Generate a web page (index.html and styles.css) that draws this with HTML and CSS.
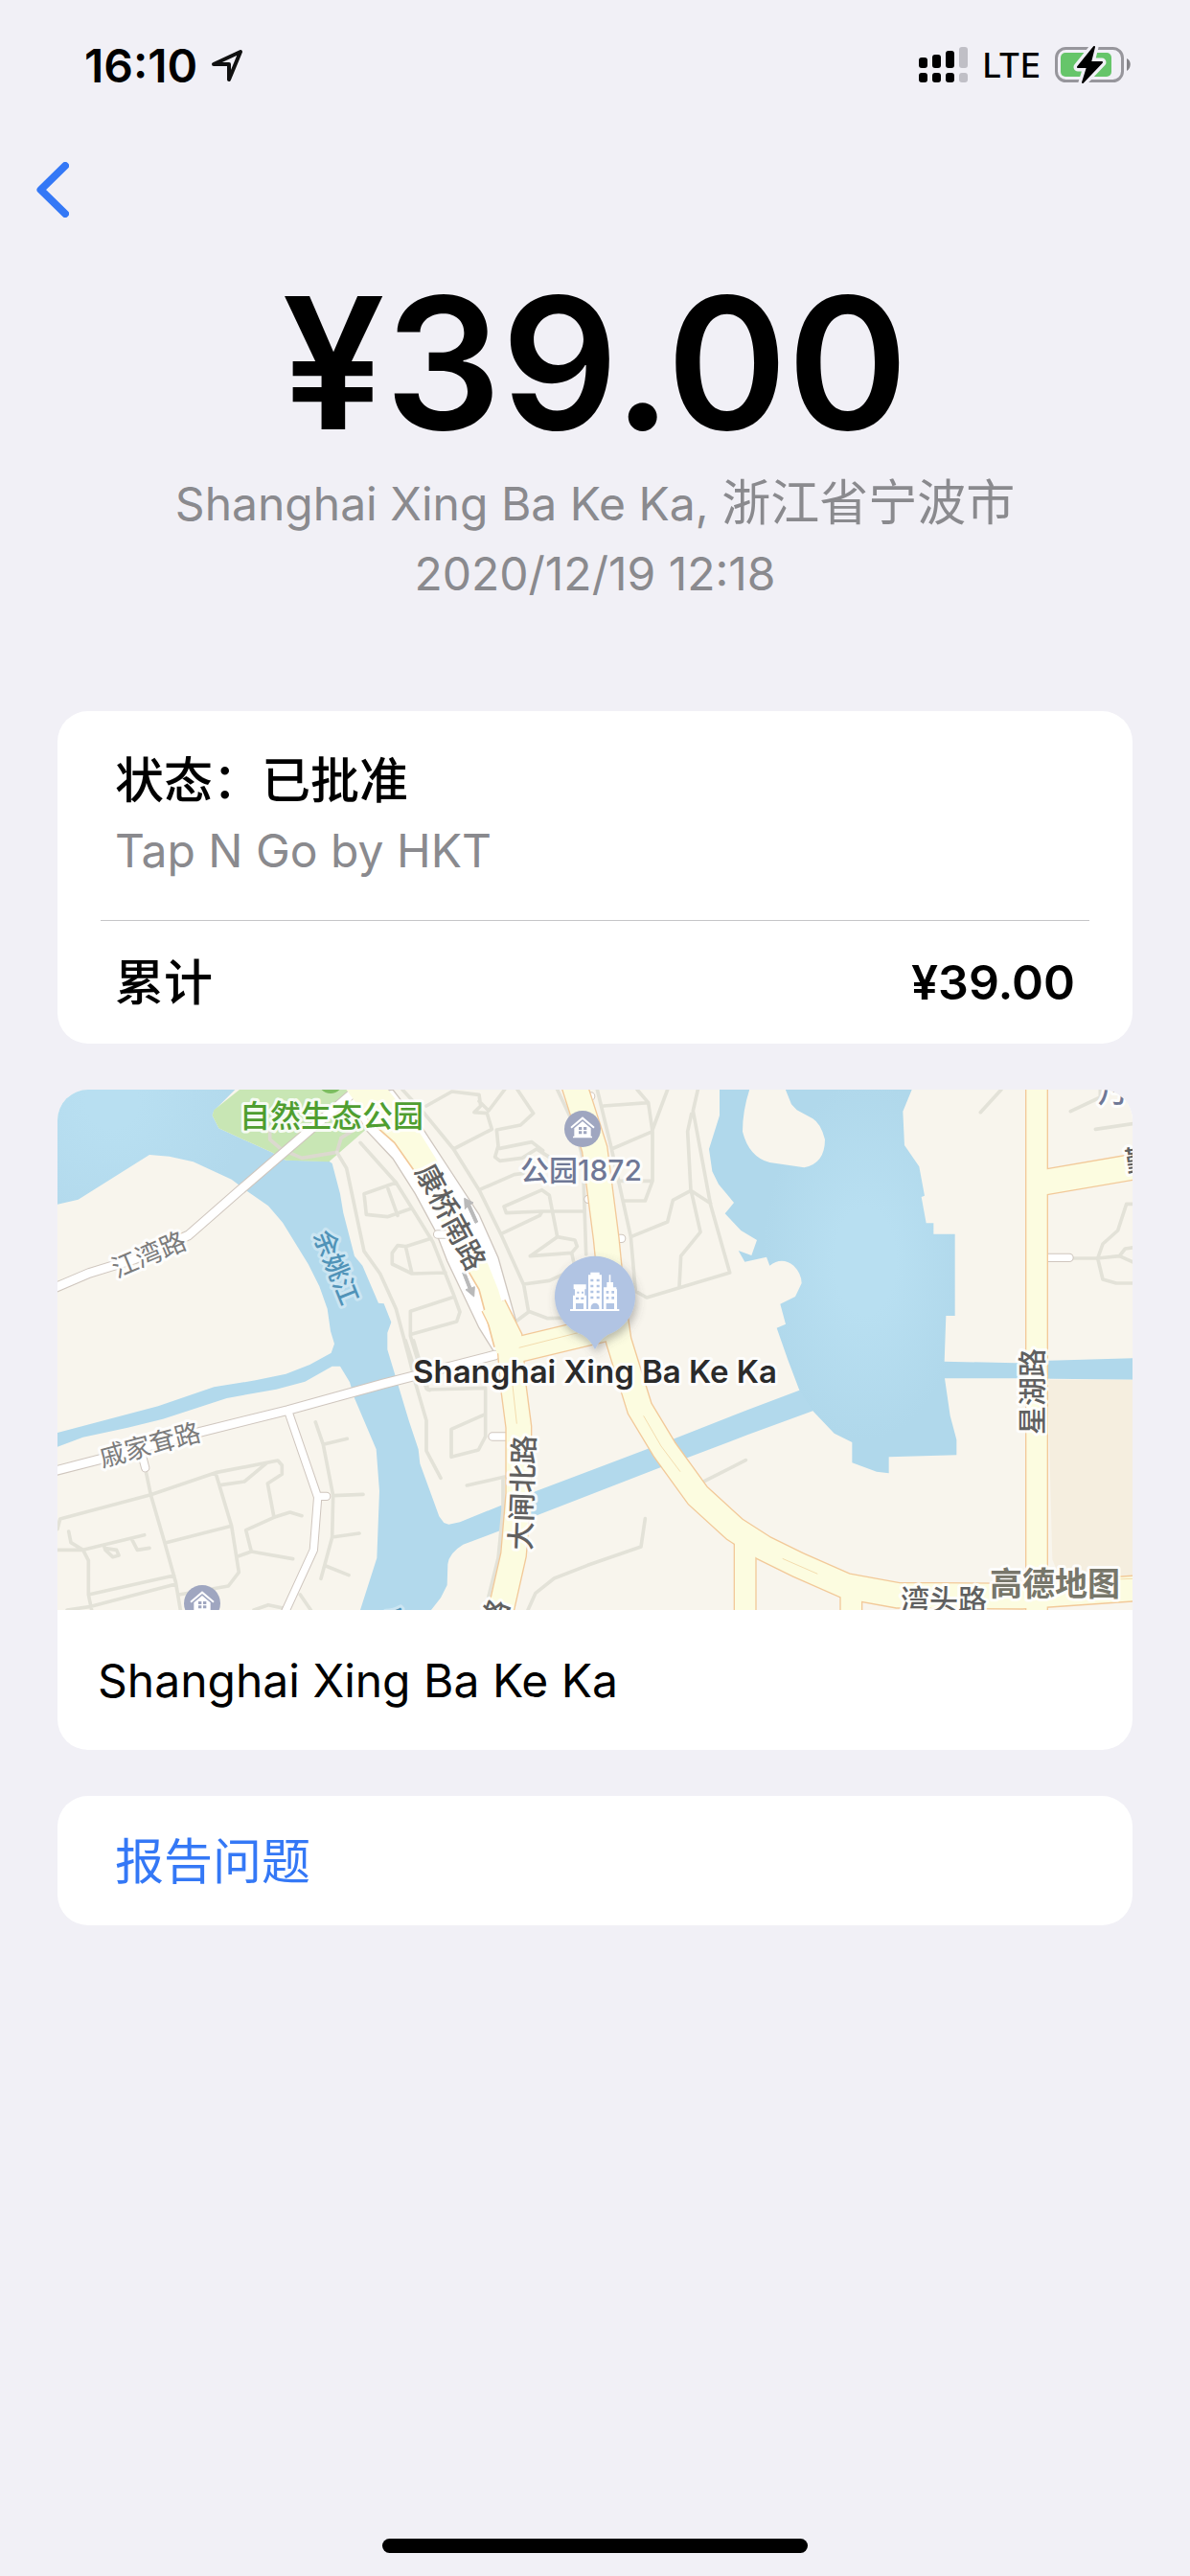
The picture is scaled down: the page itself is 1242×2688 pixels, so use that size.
FILE: index.html
```html
<!DOCTYPE html>
<html lang="zh-CN">
<head>
<meta charset="utf-8">
<meta name="viewport" content="width=device-width">
<title>¥39.00</title>
<link rel="stylesheet" href="styles.css">
</head>
<body>
<header class="status-bar">
  <div class="status-left">
    <span class="clock">16:10</span>
    <svg class="locate" viewBox="0 0 34 34" aria-hidden="true"><path d="M3 16 31 3 19 32V16Z" /></svg>
  </div>
  <div class="status-right">
    <svg class="signal" viewBox="0 0 52 38" aria-hidden="true">
      <g class="signal-on"><rect x="0" y="11" width="9" height="11" rx="3"/><rect x="14" y="8" width="9" height="14" rx="3"/><rect x="28" y="4" width="9" height="18" rx="3"/><rect x="0" y="27" width="9" height="10" rx="3"/><rect x="14" y="27" width="9" height="10" rx="3"/><rect x="28" y="27" width="9" height="10" rx="3"/></g>
      <g class="signal-off"><rect x="42" y="0" width="9" height="22" rx="3"/><rect x="42" y="27" width="9" height="10" rx="3"/></g>
    </svg>
    <span class="network">LTE</span>
    <svg class="battery" viewBox="0 0 80 40" aria-hidden="true">
      <rect class="battery-shell" x="1.500" y="2.500" width="69" height="34" rx="10"/>
      <path class="battery-nub" d="M75 13c5 2 5 10 0 13Z"/>
      <rect class="battery-level" x="6" y="7" width="53" height="25" rx="5"/>
      <path class="bolt-gap" d="M41 1 24 22h10l-5 16L49 17H37Z"/>
      <path class="bolt" d="M41 1 24 22h10l-5 16L49 17H37Z"/>
    </svg>
  </div>
</header>
<nav class="nav">
  <button class="back" type="button" aria-label="返回"><svg viewBox="0 0 34 58"><path d="M30 4 4.500 29 30 54"/></svg></button>
</nav>
<main class="content">
  <section class="summary">
    <h1 class="amount">¥39.00</h1>
    <p class="meta">Shanghai Xing Ba Ke Ka, <span class="han">浙江省宁波市</span><br>2020/12/19 12:18</p>
  </section>

  <section class="card details">
    <div class="status">
      <h2 class="row-title han">状态：已批准</h2>
      <p class="row-note">Tap N Go by HKT</p>
    </div>
    <div class="total">
      <span class="han">累计</span><span class="total-value">¥39.00</span>
    </div>
  </section>

  <section class="card place">
    <svg class="map" viewBox="0 0 1122 543" preserveAspectRatio="xMidYMid slice" role="img" aria-label="地图">
      <defs>
        <filter id="pin-shadow" x="-30%" y="-30%" width="160%" height="160%"><feDropShadow dx="6" dy="14" stdDeviation="14" flood-color="#555" flood-opacity=".4"/></filter>
        <radialGradient id="lake-light" gradientUnits="userSpaceOnUse" cx="2560" cy="560" r="560" gradientTransform="translate(1100 0) scale(.57 1)"><stop offset=".3" stop-color="#b8dff1"/><stop offset="1" stop-color="#b0d8eb"/></radialGradient>
        <radialGradient id="bay-light" gradientUnits="userSpaceOnUse" cx="200" cy="60" r="420"><stop offset=".2" stop-color="#b8dff1"/><stop offset="1" stop-color="#b2d9ec"/></radialGradient>
        <g id="house"><circle class="badge" r="57"/><path class="roof" d="M-36-4 0-34 36-4"/><path class="glyph" d="M-26-2 0-24 26-2V23H30V28H-30V23H-26Z"/><path class="badge" d="M-12-6h10v9h-10zM3-6h10v9H3zM-12 7h10v9h-10zM3 7h10v9H3z"/></g>
        <g id="roads-white">
          <path class="w32" d="M20 645 130 598 270 555 440 480 600 340 960 30"/>
          <path class="w32" d="M20 1218 160 1182 480 1095 750 1028 1050 945 1400 855"/>
          <path class="w30" d="M752 1030 845 1300 832 1465 740 1665M845 1297H872M290 1150 305 1208"/>
          <path class="w30" d="M1392 1110H1450M1220 477H1250M1760 490H1796M1690 45H1700M1692 367H1700M3110 550H3198"/>
        </g>
        <g id="roads-yellow">
          <path class="w80" d="M1395 700 1445 800 1457 950 1474 1080V1290L1458 1480 1415 1670"/>
          <path class="w80" d="M1420 850 1770 766"/>
          <path class="w80" d="M1648 10 1712 210 1748 490 1765 660 1787 810 1853 1022 1930 1150 2035 1295 2150 1400 2240 1458 2350 1512 2500 1578 2660 1607 3050 1610 3410 1585"/>
          <path class="w70" d="M2183 1440V1670M2515 1590V1670M3096 10V1670"/>
          <path class="w80" d="M3096 318 3410 264"/>
        </g>
      </defs>
      <rect class="land" width="1122" height="543"/>
      <g transform="translate(-10 -8) scale(.333333)">
        <path class="water" d="M0 0H610L520 90 515 105 535 145 700 220 745 245 880 248 890 255 915 350 925 410 960 545 985 575 1035 692 1052 694 1075 752 1063 785V838L1100 960 1130 1060 1160 1150 1165 1195 1225 1360 1240 1380 1255 1385 1290 1378 1420 1325 1530 1280 1875 1150 1965 1115 2190 1027 2353 965 2400 1000 2395 1030 2190 1105 2005 1175 1910 1210 1535 1355 1415 1405 1300 1448Q1255 1475 1252 1510L1250 1575 1230 1615 1200 1653H978L1030 1490 1038 1280 1028 1150 960 990 945 940 915 890H890L805 938 715 962 560 990 360 1055 250 1082 110 1112 30 1142V1098L345 1015 520 955 650 934 745 914 820 885 887 848 897 820 885 780 875 710 850 640 815 570 735 440 690 388 625 343 575 305 455 250 380 233 318 228 95 368 0 390Z"/>
        <path class="lake" d="M2103 0V105L2070 210 2080 280 2100 320 2148 378 2120 412 2170 465 2220 495 2203 543 2162 528 2182 563 2250 548 2260 575Q2298 545 2335 575 2360 600 2360 630L2340 672 2293 695 2310 758 2282 770 2317 870 2353 965 2395 1030 2462 1100 2518 1128V1192L2595 1220 2633 1225V1174L2845 1168V1120L2825 1045 2808 928H3030L3400 932V865L3135 872 3030 880 2807 875 2812 732H2840V476H2773V442H2750L2735 360 2745 356 2728 265 2682 198 2677 92 2715 0Z"/>
        <path class="land" d="M2205 0Q2175 80 2175 155 2195 235 2260 252L2368 268Q2433 255 2433 180 2420 130 2395 115L2345 88 2328 70 2300 0Z"/>
        <path class="park" d="M600 24 520 88 515 105 535 145 700 220 745 245 880 250 1040 110 1000 24Z"/>
        <path class="estate" d="M3130 932H3400V1580H3180L3145 1495Z"/>
        <circle class="tree" cx="885" cy="-4" r="40"/>

        <g class="lane">
          <path class="park-lane" d="M695 140V180L730 210 795 238 905 220 918 175 990 130"/>
          <path d="M905 220 935 270 990 530 1040 600 1090 710 1130 860 1150 940 1185 1060V1155L1230 1240M978 190 1090 315 1140 395 1205 500 1270 665 1290 720 1280 750 1138 790M1090 315 990 350 997 415 1063 422 1140 395M1065 335 1095 418M1200 490 1120 515 1095 512 1078 535V570L1140 600 1245 597M1120 515 1140 600M1265 675 1135 718V795L1185 960 1195 965"/>
          <g transform="translate(1050)">
            <path d="M60 24 130 100 220 210 300 338 370 480 440 635 455 720 415 750M135 75 215 30 300 40 305 75 285 95 325 98 340 148 220 210M300 60 330 90 380 24M420 24 470 98 430 135 355 150 360 200 350 235 365 247 435 238 480 210 520 235M365 208 465 188 500 215M300 338 410 290 470 282M370 475 490 418 498 405 385 410 378 390 497 338 520 355 545 485M498 405H630M460 545 545 485 600 495 607 515 590 535 460 545M590 535 600 580M440 633 520 622 590 590M455 718 515 740 600 738M545 24 600 140 625 240 635 540M670 24 715 210 775 485 790 655 825 675 1085 597 1025 385 970 90 985 24M690 75 830 65 795 24M830 65 843 155 715 210M890 24 843 150V310L820 372H750M735 310H843M965 100 953 155 963 340 1025 380M963 340 907 370 890 438 775 485M965 345 993 470 932 545 927 640"/>
          </g>
          <g transform="translate(2190)">
            <path d="M730 95 795 24M1012 92 1105 48V24M1090 148 1210 130M1020 552H1097L1165 545 1210 565M1165 545 1183 522 1210 518M1097 552 1113 618 1155 630H1210M1097 552 1113 507 1160 465 1187 382H1210"/>
          </g>
          <g transform="translate(0 810)">
            <path d="M305 400 322 482 365 630 400 755 415 843M30 590 38 558 322 482 525 413 720 375 733 390V418L688 447 708 553M685 383 615 441 540 452M525 413 575 580 598 725 565 768 410 795M370 632 575 580M708 553 620 593 637 660 767 683M595 675 637 660M708 553 758 537 795 548M30 655H110L127 688V795L137 843M65 597 72 632 110 655 302 608M175 640 180 655 203 677 222 672 215 655 180 650M263 622 280 655 318 649M127 795 395 735M60 843 135 832 400 762M838 255 862 325 893 485 890 615 855 745M862 325 937 307M893 485 987 481M890 615 975 603M870 705 942 734M645 843 690 827 740 838M790 795 823 843"/>
          </g>
          <g transform="translate(1050 810)">
            <path d="M70 0 105 110M95 0 140 153 320 148V300L298 342 213 364V277L320 230M262 453 380 426M375 430V530L360 680 330 800M453 843 477 790 535 744 640 703 807 645 820 557M1005 440 1135 374"/>
          </g>
        </g>

        <path class="avenue-side" d="M935 50 1000 155 1080 240 1150 350 1215 470 1250 560 1350 770 1400 850 1465 850V745L1410 550 1350 415 1265 285 1170 140 1080 24Z"/>
        <use href="#roads-white" class="edge-white"/>
        <use href="#roads-white" class="fill-white"/>
        <use href="#roads-yellow" class="edge-yellow"/>
        <path class="avenue" d="M930 18 1000 115 1085 190 1145 275 1315 590 1350 650 1405 850H1470L1410 650 1380 575 1215 240 1140 120 1060 18Z"/>
        <path class="avenue-edge" d="M1000 115 1085 190 1145 275M1315 590 1350 650 1398 830"/>
        <use href="#roads-yellow" class="fill-yellow"/>
        <path class="median" d="M1475 832 1660 785M1455 950 1468 1070M1865 1045 1920 1140 1980 1220M2300 1492 2410 1540M3250 1560 3396 1555"/>
        <path class="arrow" d="M1338 442 1346 438 1322 384 1332 378 1304 364 1306 398 1314 390ZM1298 598 1306 594 1326 645 1336 641 1334 672 1308 650 1317 647Z"/>
      </g>

      <g class="labels">
        <text class="lbl-park" x="190" y="39">自然生态公园</text>
        <text class="lbl-poi" x="483" y="95">公园1872</text>
        <text class="lbl-minor mid" transform="translate(99 181) rotate(-23)">江湾路</text>
        <text class="lbl-water mid" transform="translate(282 189) rotate(68)">余姚江</text>
        <text class="lbl-major mid" transform="translate(401 138) rotate(62)">康桥南路</text>
        <text class="lbl-major mid" transform="translate(496 421) rotate(-88)">大闸北路</text>
        <text class="lbl-major mid" transform="translate(1028 315) rotate(-90)">星湖路</text>
        <text class="lbl-minor mid" transform="translate(99 380) rotate(-15)">戚家耷路</text>
        <text class="lbl-major" x="880" y="543">湾头路</text>
        <text class="lbl-poi" x="1086" y="13">乃</text>
        <text class="lbl-major" transform="translate(1116 86) rotate(-8)">鄞</text>
        <text class="lbl-major mid" transform="translate(467 551) rotate(-70)">路</text>
        <text class="lbl-water mid" transform="translate(350 562) rotate(20)">余</text>
        <text class="lbl-brand" x="973" y="528">高德地图</text>
      </g>

      <g transform="translate(-10 -8) scale(.333333)">
        <use href="#house" x="1674" y="147"/>
        <use href="#house" x="483" y="1632"/>
        <g transform="translate(1713 665)">
          <path class="pin" filter="url(#pin-shadow)" d="M0 172Q-14 142-40 126A126 126 0 1 1 40 126Q14 142 0 172Z"/>
          <path class="glyph" fill-rule="evenodd" d="M-78 46H76V52H-78ZM-67-31H-28V-16H-67ZM-69 3H-27V46H-69ZM-60 9V16H-51V9ZM-44 9V16H-35V9ZM-60 28V46H-36V28ZM-63-16H-32V3H-63ZM-56-9V-3H-50V-9ZM-42-9V-3H-36V-9ZM-14-69H14V-61H21V46H13V40A13 13 0 0 0-13 40V46H-21V-61H-14ZM-14-48V-40H-5V-48ZM5-48V-40H14V-48ZM-14-30V-22H-5V-30ZM5-30V-22H14V-30ZM-14-12V-4H-5V-12ZM5-12V-4H14V-12ZM-14 6V14H-5V6ZM5 6V14H14V6ZM27-22H37V-38H44V-61H49V-38H57V-22H67V-16H69V46H27ZM35-11V-3H43V-11ZM52-11V-3H60V-11ZM35 7V15H43V7ZM52 7V15H60V7ZM35 28V46H60V28Z"/>
        </g>
      </g>
      <text class="lbl-pin" x="561" y="306">Shanghai Xing Ba Ke Ka</text>
    </svg>
    <p class="place-name">Shanghai Xing Ba Ke Ka</p>
  </section>

  <button class="card report han" type="button">报告问题</button>
</main>
<footer class="home"><span class="home-bar"></span></footer>
</body>
</html>
```
FILE: styles.css
```css
* { box-sizing: border-box; }

body {
  margin: 0;
  min-height: 100vh;
  display: flex;
  flex-direction: column;
  background: #f1f0f6;
  color: #000;
  font: 400 48px/73px Inter, "Noto Sans CJK SC", sans-serif;
}

h1, h2, p { margin: 0; }
button { font: inherit; border: 0; background: none; cursor: pointer; }

/* Status bar */
.status-bar {
  height: 136px;
  padding: 0 61px 0 88px;
  display: flex;
  align-items: center;
  justify-content: space-between;
}
.status-left, .status-right { display: flex; align-items: center; }
.status-left { gap: 14px; }
.clock { font-weight: 600; }
.locate { width: 34px; height: 34px; fill: none; stroke: #111; stroke-width: 4; stroke-linejoin: round; }
.status-right { gap: 15px; }
.signal { width: 52px; height: 38px; }
.signal-off { fill: #c0bfc6; }
.network { font-size: 35px; font-weight: 500; }
.battery { width: 80px; height: 40px; }
.battery-shell { fill: none; stroke: #97969c; stroke-width: 3; }
.battery-nub { fill: #858489; }
.battery-level { fill: #66c56a; }
.bolt { stroke: #000; stroke-width: 2; stroke-linejoin: round; }
.bolt-gap { stroke: #f1f0f6; stroke-width: 9; stroke-linejoin: round; }

/* Navigation */
.nav { height: 134px; display: flex; padding-left: 38px; }
.back { width: 88px; height: 124px; padding: 0; text-align: left; }
.back svg { display: block; width: 34px; height: 58px; fill: none; stroke: #3478f6; stroke-width: 8; stroke-linecap: round; stroke-linejoin: round; }

/* Content */
.content { padding: 0 60px; display: flex; flex-direction: column; gap: 48px; }
.summary { text-align: center; padding-bottom: 60px; }
.amount { font-size: 191px; line-height: 218px; font-weight: 600; }
.meta, .row-note { color: #8a8a8e; }
.meta { height: 146px; }
.han { font-size: 51px; }

.card { background: #fff; border-radius: 32px; overflow: hidden; }
.details { padding: 0 45px; }
.status { padding: 36px 15px; border-bottom: 1px solid #c6c6c8; }
.row-title { font-weight: 500; }
.total { padding: 28px 15px 27px; display: flex; justify-content: space-between; font-weight: 500; }
.total-value { font-size: 50px; font-weight: 600; }
.place-name { padding: 37px 42px 36px; }
.report { width: 100%; padding: 32px 60px 30px; text-align: left; color: #3478f6; }

/* Map */
.map { display: block; width: 100%; height: auto; }
.land { fill: #f8f5ed; }
.water { fill: url(#bay-light); }
.lake { fill: url(#lake-light); }
.park { fill: #c8e6b4; }
.tree { fill: #7cbd60; }
.estate { fill: #f5eedf; }
.lane { fill: none; stroke: #e3e2d8; stroke-width: 11; stroke-linecap: round; stroke-linejoin: round; }
.park-lane { stroke: #dcd9cf; }
.avenue-side { fill: #fff; stroke: #cfc7bf; stroke-width: 4; }
.avenue { fill: #fcfce0; }
.avenue-edge { fill: none; stroke: #f2c999; stroke-width: 5; }
.edge-white { fill: none; stroke: #cfc6be; stroke-linecap: round; stroke-linejoin: round; --grow: 6px; }
.fill-white { fill: none; stroke: #fff; stroke-linecap: round; stroke-linejoin: round; --grow: 0px; }
.edge-yellow { fill: none; stroke: #f2c999; --grow: 8px; }
.fill-yellow { fill: none; stroke: #fcfce0; --grow: 0px; }
.w30 { stroke-width: calc(22px + var(--grow)); }
.w32 { stroke-width: calc(26px + var(--grow)); }
.w70 { stroke-width: calc(64px + var(--grow)); }
.w80 { stroke-width: calc(76px + var(--grow)); }
.median { fill: none; stroke: #f3dcae; stroke-width: 3; }
.arrow { fill: #b9b9b9; stroke: #b9b9b9; stroke-width: 3; }
.badge { fill: #9fa6c0; }
.glyph { fill: #fff; }
.roof { fill: none; stroke: #fff; stroke-width: 6; }
.pin { fill: #b1c4e3; }

.labels text, .lbl-pin { paint-order: stroke; stroke: rgba(255, 255, 255, .85); stroke-width: 6px; stroke-linejoin: round; }
.mid { text-anchor: middle; }
.lbl-park { font-size: 32px; font-weight: 500; fill: #4f9e30; }
.lbl-poi { font-size: 30px; font-weight: 500; fill: #6f7896; }
.lbl-minor { font-size: 27px; fill: #7c7c7c; }
.labels .lbl-water { font-size: 27px; font-weight: 500; fill: #5093b8; stroke: rgba(215, 235, 245, .7); }
.lbl-major { font-size: 30px; font-weight: 500; fill: #606060; }
.lbl-brand { font-size: 34px; font-weight: 700; fill: #77766a; }
.lbl-pin { font-size: 33px; font-weight: 600; fill: #2b2b2b; text-anchor: middle; }

/* Home indicator */
.home { margin-top: auto; padding: 24px 0; display: flex; justify-content: center; }
.home-bar { width: 444px; height: 15px; border-radius: 8px; background: #000; }
```
